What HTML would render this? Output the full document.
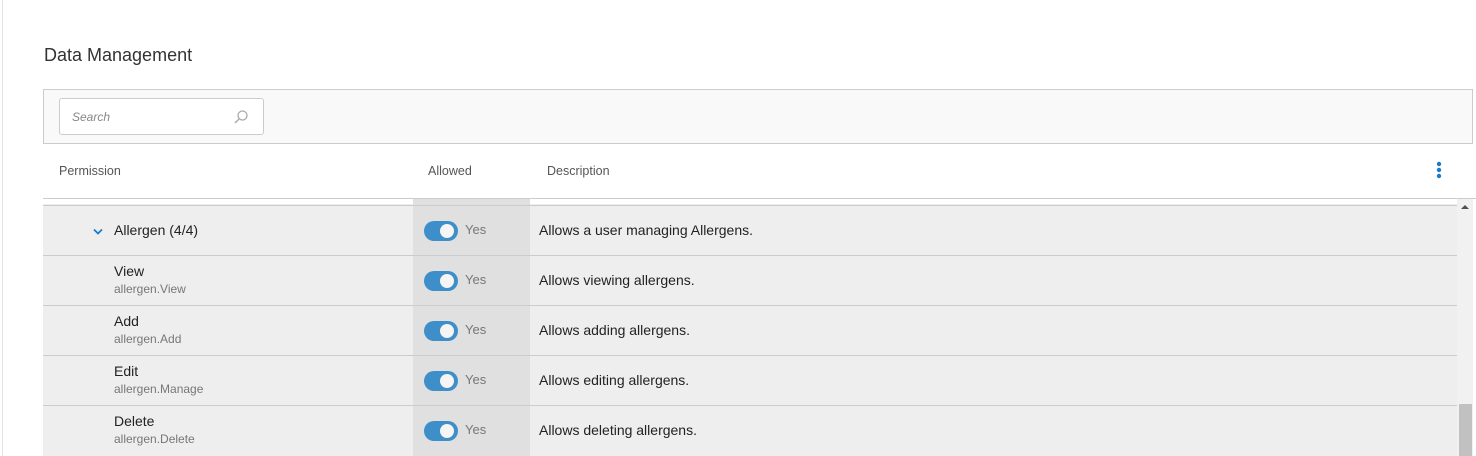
<!DOCTYPE html>
<html><head><style>
*{margin:0;padding:0;box-sizing:border-box}
body{width:1476px;height:456px;background:#fff;position:relative;overflow:hidden;font-family:"Liberation Sans",sans-serif}
.lb{position:absolute;left:2px;top:0;width:1px;height:456px;background:#e3e3e3}
h1{position:absolute;left:44px;top:45px;font-size:18px;font-weight:normal;color:#333}
.bar{position:absolute;left:43px;top:89px;width:1430px;height:55px;background:#f9f9f9;border:1px solid #ccc}
.search{position:absolute;left:15px;top:8px;width:205px;height:37px;background:#fff;border:1px solid #ccc;border-radius:3px}
.search span{position:absolute;left:12px;top:11px;font-size:12px;font-style:italic;color:#888}
.search svg{position:absolute;left:173px;top:10px}
.hd{position:absolute;top:164px;font-size:12.5px;color:#555}
.hline{position:absolute;left:43px;top:198px;width:1433px;height:1px;background:#ccc}
.rows{position:absolute;left:43px;top:204px;width:1414px;height:252px;background:#eee}
.row{position:absolute;left:0;width:1414px;height:50px;border-top:1px solid #ccc}
.col{position:absolute;left:370px;top:199px;width:117px;height:257px;background:#e0e0e0}
.tg{position:absolute;left:381px;top:15px;width:34px;height:20px;border-radius:10px;background:#3d8ec9}
.tg::after{content:"";position:absolute;left:16px;top:3px;width:14px;height:14px;border-radius:50%;background:#f5f5f5}
.yes{position:absolute;left:422px;top:16px;font-size:13px;color:#777}
.desc{position:absolute;left:496px;top:16px;font-size:14px;color:#222}
.nm{position:absolute;left:71px;top:7px;font-size:14px;color:#222}
.sub{position:absolute;left:71px;top:26px;font-size:12px;color:#777}
.sb{position:absolute;left:1457px;top:199px;width:16px;height:257px;background:#f1f1f1}
.th{position:absolute;left:2px;top:205px;width:13px;height:52px;background:#c1c1c1}
</style></head><body>
<div class="lb"></div>
<h1>Data Management</h1>
<div class="bar"><div class="search"><span>Search</span><svg width="16" height="16" viewBox="0 0 16 16"><circle cx="9.5" cy="6.5" r="4.5" fill="none" stroke="#aaa" stroke-width="1.3"/><path d="M6.3 9.7L2 14" stroke="#aaa" stroke-width="1.4"/></svg></div></div>
<div class="hd" style="left:59px">Permission</div>
<div class="hd" style="left:428px">Allowed</div>
<div class="hd" style="left:547px">Description</div>
<svg style="position:absolute;left:1436px;top:161px" width="6" height="18"><circle cx="3" cy="3" r="2.2" fill="#1a7cc9"/><circle cx="3" cy="9" r="2.2" fill="#1a7cc9"/><circle cx="3" cy="15" r="2.2" fill="#1a7cc9"/></svg>
<div class="hline"></div>
<div class="rows">
<div class="col" style="top:-5px"></div>
<div class="row" style="top:1px"><svg style="position:absolute;left:50px;top:22px" width="10" height="8"><path d="M1 1.5L5 5.5L9 1.5" fill="none" stroke="#1a7cc9" stroke-width="1.8"/></svg><div class="nm" style="top:16px">Allergen (4/4)</div><div class="tg"></div><div class="yes">Yes</div><div class="desc">Allows a user managing Allergens.</div></div>
<div class="row" style="top:51px"><div class="nm">View</div><div class="sub">allergen.View</div><div class="tg"></div><div class="yes">Yes</div><div class="desc">Allows viewing allergens.</div></div>
<div class="row" style="top:101px"><div class="nm">Add</div><div class="sub">allergen.Add</div><div class="tg"></div><div class="yes">Yes</div><div class="desc">Allows adding allergens.</div></div>
<div class="row" style="top:151px"><div class="nm">Edit</div><div class="sub">allergen.Manage</div><div class="tg"></div><div class="yes">Yes</div><div class="desc">Allows editing allergens.</div></div>
<div class="row" style="top:201px"><div class="nm">Delete</div><div class="sub">allergen.Delete</div><div class="tg"></div><div class="yes">Yes</div><div class="desc">Allows deleting allergens.</div></div>
</div>
<div class="sb"><svg style="position:absolute;left:4px;top:5px" width="8" height="5"><path d="M0 5L4 1L8 5Z" fill="#505050"/></svg><div class="th"></div></div>
</body></html>
